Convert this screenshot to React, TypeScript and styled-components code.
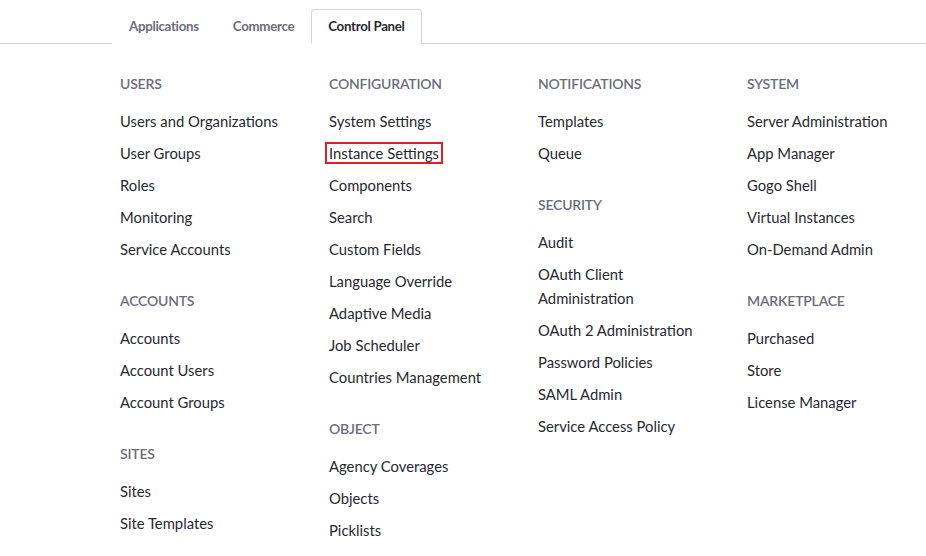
import * as React from 'react';
import styled, { createGlobalStyle } from 'styled-components';

const GlobalStyle = createGlobalStyle`
    html, body {
        margin: 0;
        padding: 0;
        background: #ffffff;
        font-family: Lato, "Open Sans", sans-serif;
    }
`;

interface ISection {
    title: string;
    links: string[];
}

const columns: ISection[][] = [
    [
        { title: 'Users', links: ['Users and Organizations', 'User Groups', 'Roles', 'Monitoring', 'Service Accounts'] },
        { title: 'Accounts', links: ['Accounts', 'Account Users', 'Account Groups'] },
        { title: 'Sites', links: ['Sites', 'Site Templates'] },
    ],
    [
        {
            title: 'Configuration',
            links: [
                'System Settings',
                'Instance Settings',
                'Components',
                'Search',
                'Custom Fields',
                'Language Override',
                'Adaptive Media',
                'Job Scheduler',
                'Countries Management',
            ],
        },
        { title: 'Object', links: ['Agency Coverages', 'Objects', 'Picklists'] },
    ],
    [
        { title: 'Notifications', links: ['Templates', 'Queue'] },
        {
            title: 'Security',
            links: [
                'Audit',
                'OAuth Client Administration',
                'OAuth 2 Administration',
                'Password Policies',
                'SAML Admin',
                'Service Access Policy',
            ],
        },
    ],
    [
        {
            title: 'System',
            links: ['Server Administration', 'App Manager', 'Gogo Shell', 'Virtual Instances', 'On-Demand Admin'],
        },
        { title: 'Marketplace', links: ['Purchased', 'Store', 'License Manager'] },
    ],
];

const tabs = ['Applications', 'Commerce', 'Control Panel'];

export default function App() {
    const [active, setActive] = React.useState('Control Panel');

    return (
        <Page>
            <GlobalStyle />
            <TabBar>
                {tabs.map(t => (
                    <Tab key={t} active={t === active} onClick={() => setActive(t)}>
                        {t}
                    </Tab>
                ))}
            </TabBar>
            <Grid>
                {columns.map((col, i) => (
                    <Column key={i}>
                        {col.map(section => (
                            <Section key={section.title}>
                                <Heading>{section.title}</Heading>
                                <LinkList>
                                    {section.links.map(link => (
                                        <li key={link}>
                                            <NavLink highlighted={link === 'Instance Settings'}>{link}</NavLink>
                                        </li>
                                    ))}
                                </LinkList>
                            </Section>
                        ))}
                    </Column>
                ))}
            </Grid>
        </Page>
    );
}

const Page = styled('div')`
    width: 926px;
    height: 556px;
    overflow: hidden;
`;

const TabBar = styled('div')`
    display: flex;
    align-items: flex-end;
    height: 44px;
    padding-left: 112px;
    border-bottom: 1px solid #d6d6dc;
    box-sizing: border-box;
`;

const Tab = styled('button')<{ active: boolean }>`
    height: 35px;
    margin-bottom: -1px;
    padding: 0 16px 2px 16px;
    border: 1px solid ${p => (p.active ? '#d6d6dc' : 'transparent')};
    border-bottom-color: ${p => (p.active ? '#ffffff' : 'transparent')};
    border-radius: 4px 4px 0 0;
    background: #ffffff;
    font-family: Lato, sans-serif;
    font-size: 13.3px;
    font-weight: 700;
    letter-spacing: -0.3px;
    color: ${p => (p.active ? '#272833' : '#6b6c7e')};
    cursor: pointer;
`;

const Grid = styled('div')`
    display: grid;
    grid-template-columns: repeat(4, 209px);
    padding: 28px 0 0 120px;
`;

const Column = styled('div')`
    display: flex;
    flex-direction: column;
    gap: 28px;
`;

const Section = styled('div')`
    display: flex;
    flex-direction: column;
    gap: 13px;
`;

const Heading = styled('h3')`
    margin: 0;
    font-size: 14px;
    line-height: 24px;
    font-weight: 600;
    letter-spacing: -0.2px;
    text-transform: uppercase;
    color: #6b6c7e;
`;

const LinkList = styled('ul')`
    display: flex;
    flex-direction: column;
    gap: 8px;
    margin: 0;
    padding: 0;
    list-style: none;
    max-width: 172px;
`;

const NavLink = styled('a')<{ highlighted: boolean }>`
    font-size: 14.8px;
    line-height: 24px;
    color: #272833;
    text-decoration: none;
    cursor: pointer;
    outline: ${p => (p.highlighted ? '2px solid #e02020' : 'none')};
    outline-offset: 0;
    padding: 0 2px;
    margin: 0 -2px;
`;
